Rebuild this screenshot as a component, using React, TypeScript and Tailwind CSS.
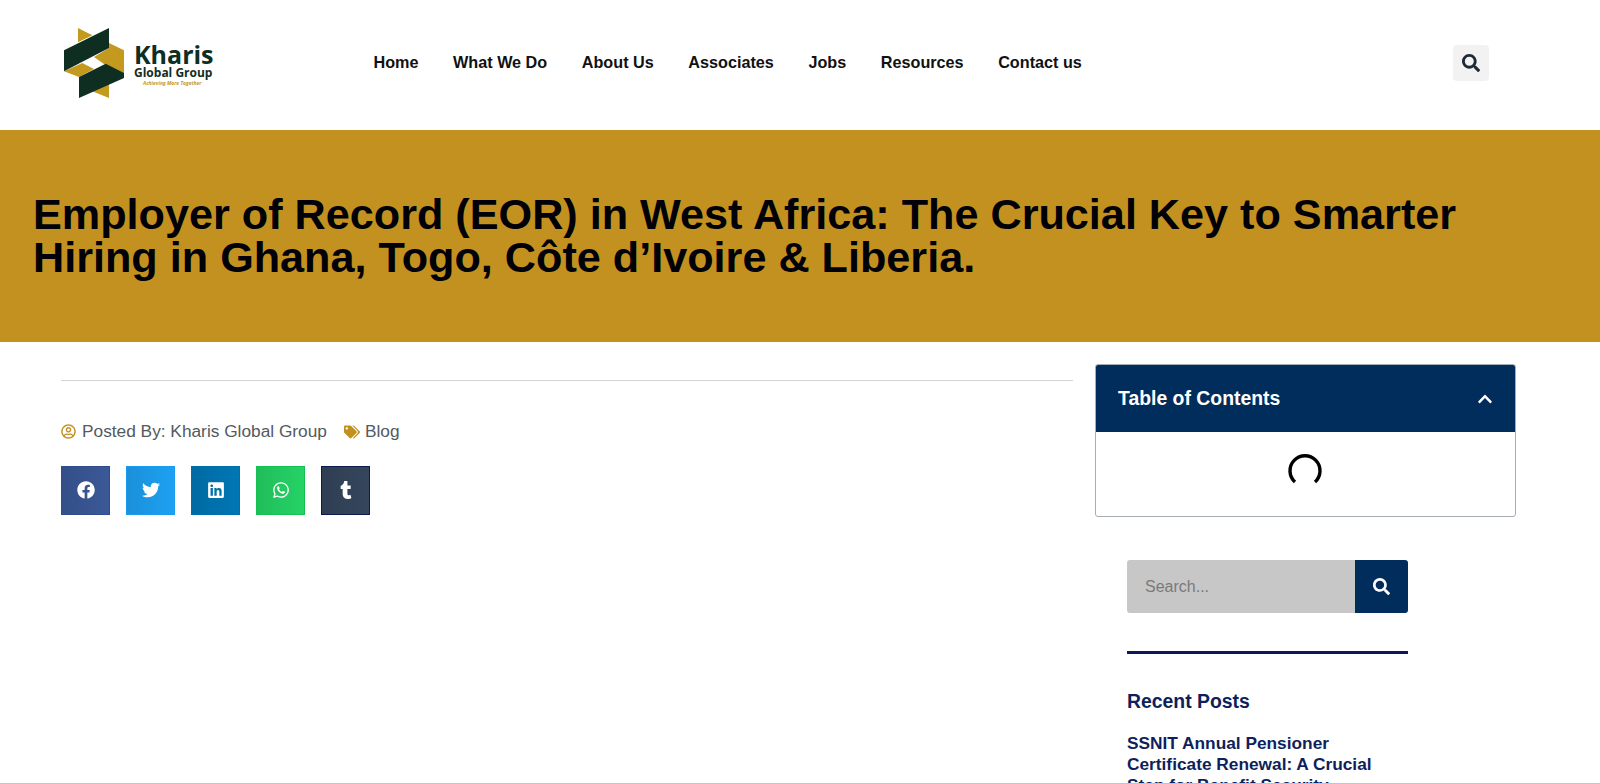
import { FaFacebook, FaTwitter, FaLinkedin, FaWhatsapp, FaTumblr, FaSearch, FaRegUserCircle, FaTags, FaChevronUp } from "react-icons/fa";

const navLinks = ["Home", "What We Do", "About Us", "Associates", "Jobs", "Resources", "Contact us"];

const shareButtons = [
  { icon: FaFacebook, className: "from-[#344f88] to-[#3b5998] border-[#2f4c8c]" },
  { icon: FaTwitter, className: "from-[#1a90d9] to-[#1da1f2] border-[#1a9af0]" },
  { icon: FaLinkedin, className: "from-[#006aa3] to-[#0077b5] border-[#006eaa]" },
  { icon: FaWhatsapp, className: "from-[#21bd5b] to-[#25d366] border-[#14c050]" },
  { icon: FaTumblr, className: "from-[#2f3e52] to-[#35465c] border-[#0d1a4a]" },
];

function Logo() {
  return (
    <div className="flex items-start w-[160px] h-[72px] mt-[2px]">
      <svg viewBox="15 25 180 210" className="w-[60px] h-[70px] shrink-0">
        <polygon points="57,25 100,47 57,68" fill="#c49a1e" />
        <polygon points="150,70 195,92 195,175 105,112 150,85" fill="#c49a1e" />
        <polygon points="15,155 70,130 105,148 60,172" fill="#c49a1e" />
        <polygon points="100,215 150,190 150,235" fill="#c49a1e" />
        <polygon points="15,92 150,25 150,85 15,155" fill="#0f2e22" />
        <polygon points="60,172 140,132 195,160 195,175 60,235" fill="#0f2e22" />
      </svg>
      <div className="ml-[10px] mt-[14px] font-['Open_Sans',sans-serif] text-[#0f2e22]">
        <div className="text-[25px] font-bold leading-[24px]">Kharis</div>
        <div className="text-[12px] font-bold leading-[13px] whitespace-nowrap">Global Group</div>
        <div className="text-[5px] font-bold leading-[9px] text-[#c49a1e] italic ml-[9px] whitespace-nowrap">Achieving More Together</div>
      </div>
    </div>
  );
}

export default function App() {
  return (
    <div className="h-[784px] overflow-hidden bg-white font-['Liberation_Sans',Arial,sans-serif] border-b border-[#c4c4c4]">
      <header className="h-[130px] flex items-center pl-[64px] pb-[5px]">
        <Logo />
        <nav className="ml-[149.5px] flex gap-[34.6px] text-[16.2px] font-bold text-[#111111]">
          {navLinks.map((link) => (
            <a key={link} className="whitespace-nowrap">{link}</a>
          ))}
        </nav>
        <button className="ml-[371.5px] w-[36px] h-[36px] rounded-[4px] bg-[#f2f2f2] flex items-center justify-center text-[#1f2937]">
          <FaSearch className="w-[18px] h-[18px]" />
        </button>
      </header>

      <section className="h-[212px] bg-[#c3911f] flex items-center pl-[33px] pr-[100px]">
        <h1 className="text-[43.2px] leading-[43.5px] font-bold text-[#000008]">
          Employer of Record (EOR) in West Africa: The Crucial Key to Smarter Hiring in Ghana, Togo, Côte d’Ivoire &amp; Liberia.
        </h1>
      </section>

      <main className="flex pl-[61px]">
        <div className="w-[1012px] pt-[38px]">
          <hr className="border-[#d4d4d4]" />
          <div className="mt-[38px] flex items-center text-[17.3px] text-[#54595f]">
            <FaRegUserCircle className="w-[15px] h-[15px] text-[#c2901e] mr-[6px]" />
            <span>Posted By: Kharis Global Group</span>
            <FaTags className="w-[16px] h-[16px] text-[#c2901e] ml-[17px] mr-[5px]" />
            <span>Blog</span>
          </div>
          <div className="mt-[21px] flex gap-[16px]">
            {shareButtons.map(({ icon: Icon, className }, i) => (
              <div key={i} className={`w-[49px] h-[49px] border bg-linear-to-r flex items-center justify-center text-white ${className}`}>
                <Icon className="w-[18px] h-[18px]" />
              </div>
            ))}
          </div>
        </div>

        <aside className="ml-[22px] w-[421px] pt-[22px]">
          <div className="h-[153px] rounded-[3px] border border-[#a8adb5] overflow-hidden">
            <div className="h-[67px] bg-[#002d5b] flex items-center justify-between pl-[22px] pr-[22px] text-white">
              <span className="text-[19.4px] font-bold">Table of Contents</span>
              <FaChevronUp className="w-[16px] h-[16px]" />
            </div>
            <div className="flex justify-center pt-[22px]">
              <svg viewBox="0 0 34 34" className="w-[34px] h-[34px] -ml-[2px]">
                <path d="M7 28 A15 15 0 1 1 27 28" fill="none" stroke="#000000" strokeWidth="3.4" />
              </svg>
            </div>
          </div>

          <div className="ml-[32px] w-[281px] mt-[43px]">
            <div className="flex h-[53px] rounded-[3px] overflow-hidden">
              <div className="flex-1 bg-[#c7c7c7] pl-[18px] flex items-center text-[16px] text-[#7a7a7a]">Search...</div>
              <div className="w-[53px] bg-[#002d5b] flex items-center justify-center text-white">
                <FaSearch className="w-[17px] h-[17px]" />
              </div>
            </div>
            <div className="mt-[38px] h-[3px] bg-[#0a1a5c]" />
            <h2 className="mt-[33px] text-[19.4px] font-bold text-[#0f1f5c]">Recent Posts</h2>
            <div className="mt-[17px] text-[17.3px] leading-[20.7px] font-bold text-[#0f1f5c]">
              SSNIT Annual Pensioner Certificate Renewal: A Crucial Step for Benefit Security
            </div>
          </div>
        </aside>
      </main>
    </div>
  );
}
